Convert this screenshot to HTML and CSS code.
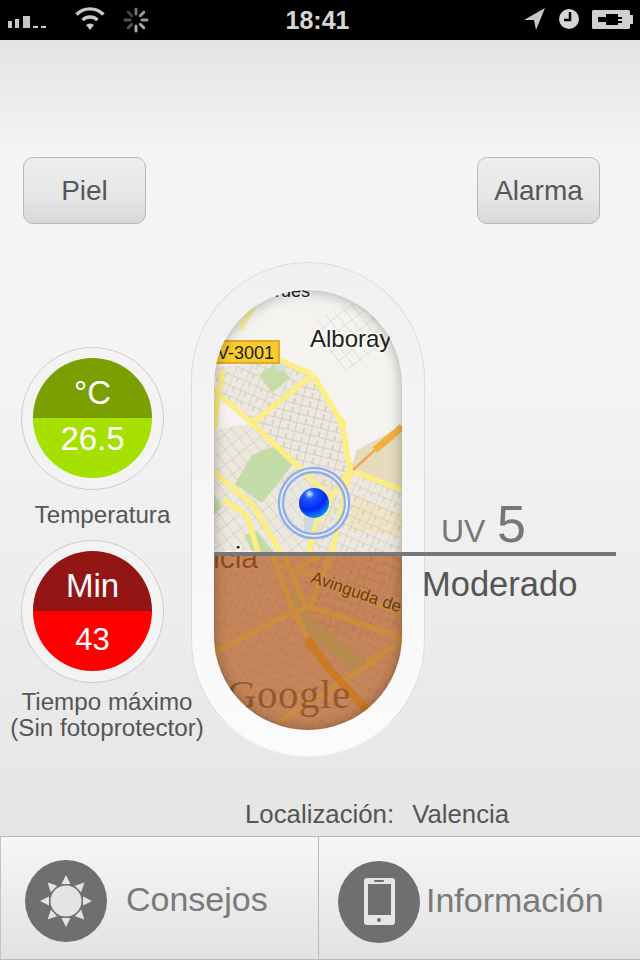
FILE: index.html
```html
<!DOCTYPE html>
<html lang="en">
<head>
<meta charset="utf-8">
<title>UV</title>
<link rel="stylesheet" href="styles.css">
</head>
<body>
<div class="status">
	<svg class="status-left" width="155" height="40" viewBox="0 0 155 40">
		<g fill="#c8c8c8">
			<rect x="8" y="21" width="4" height="7"/>
			<rect x="15" y="19" width="4" height="9"/>
			<rect x="23" y="16" width="7" height="12"/>
			<rect x="33" y="26" width="5" height="2"/>
			<rect x="41" y="26" width="5" height="2"/>
			<path d="M90 30l-4-5a6 6 0 0 1 8 0z"/>
		</g>
		<g fill="none" stroke="#c8c8c8" stroke-width="3.4">
			<path d="M82.500 20a11 11 0 0 1 15 0"/>
			<path d="M76.500 14.500a19 19 0 0 1 27 0"/>
		</g>
		<g stroke-width="3" stroke-linecap="round">
			<path d="M136 9v5" stroke="#777"/>
			<path d="M143.800 12.200l-3.500 3.500" stroke="#999"/>
			<path d="M147 20h-5" stroke="#999"/>
			<path d="M143.800 27.800l-3.500-3.500" stroke="#aaa"/>
			<path d="M136 31v-5" stroke="#aaa"/>
			<path d="M128.200 27.800l3.500-3.500" stroke="#555"/>
			<path d="M125 20h5" stroke="#555"/>
			<path d="M128.200 12.200l3.500 3.500" stroke="#444"/>
		</g>
	</svg>
	<div class="status-time">18:41</div>
	<svg class="status-right" width="160" height="40" viewBox="480 0 160 40">
		<path d="M524 20l21-12-9 22-2-10z" fill="#c8c8c8"/>
		<circle cx="569" cy="19" r="10" fill="#d5d5d5"/>
		<path d="M570 12v8h-6" fill="none" stroke="#000" stroke-width="2.500"/>
		<rect x="592" y="10" width="38" height="19" rx="1.500" fill="#d0d0d0"/>
		<rect x="630" y="15" width="3" height="9" fill="#d0d0d0"/>
		<path d="M598 17h8v-3h12v3h4v2h-4v2h4v2h-4v2h-12v-3h-8z" fill="#000"/>
	</svg>
</div>

<div class="main">
	<div class="top-buttons">
		<div class="btn">Piel</div>
		<div class="btn">Alarma</div>
	</div>

	<div class="content">
		<div class="side">
			<div class="gauge">
				<div class="gauge-top green-dark">°C</div>
				<div class="gauge-bottom green-light raised">26.5</div>
			</div>
			<div class="side-label label-temp">Temperatura</div>
			<div class="gauge">
				<div class="gauge-top red-dark">Min</div>
				<div class="gauge-bottom red-light small">43</div>
			</div>
			<div class="side-label label-time">Tiempo máximo<br>(Sin fotoprotector)</div>
		</div>

		<div class="capsule">
			<div class="map">
				<svg width="188" height="440" viewBox="0 0 188 440">
					<defs>
						<pattern id="streets" width="13" height="10" patternUnits="userSpaceOnUse" patternTransform="rotate(24)">
							<path d="M0 0h13M0 0v10M6 0v5" stroke="#8f8578" stroke-width=".6" fill="none"/>
						</pattern>
						<pattern id="streets2" width="9" height="12" patternUnits="userSpaceOnUse" patternTransform="rotate(-38)">
							<path d="M0 0h9M0 0v12" stroke="#8f8578" stroke-width=".6" fill="none"/>
						</pattern>
						<pattern id="streets3" width="16" height="9" patternUnits="userSpaceOnUse" patternTransform="rotate(14)">
							<path d="M0 0h16M0 0v9M9 4v5" stroke="#7e7568" stroke-width=".6" fill="none"/>
						</pattern>
						<radialGradient id="dot" cx=".35" cy=".2" r=".9">
							<stop offset="0" stop-color="#e8f4ff"/>
							<stop offset=".18" stop-color="#1b5cff"/>
							<stop offset=".6" stop-color="#0428f0"/>
							<stop offset="1" stop-color="#00b4ff"/>
						</radialGradient>
					</defs>
					<rect width="188" height="440" fill="#f4f3f0"/>
					<path d="M0 78l66-8 33 15-61 48-34-30zM0 140l38-7 71 67-15 66H0zM99 85l29 48 8 47-27 20-71-67zM136 180l52 20v66H94l15-66z" fill="#ece8de"/>
					<path d="M143 160l45-24v64l-52-20z" fill="#e6dcbd"/>
					<path d="M92 196l24-15 8 40-20 25-22-30zM140 205l48 20v20l-55-5z" fill="#efe4c6"/>
					<path d="M0 78l66-8 33 15-61 48-34-30z" fill="url(#streets)" opacity=".65"/>
					<path d="M0 140l38-7 71 67-15 66H0z" fill="url(#streets2)" opacity=".6"/>
					<path d="M99 85l29 48 8 47-27 20-71-67z" fill="url(#streets3)" opacity=".7"/>
					<path d="M136 180l52 20v66H94l15-66z" fill="url(#streets)" opacity=".6"/>
					<path d="M100 30l35-16 20 0 18 42-40 26-17-20z" fill="url(#streets2)" opacity=".55"/>
					<path d="M45 85l18-13 13 16-18 15z" fill="#c8dca8"/>
					<path d="M38 165l22-9 20 17-32 40-27-19z" fill="#c3dba6"/>
					<path d="M0 205l8 12-8 8zM30 245l13-4 20 25H40z" fill="#c3dba6"/>
					<path d="M61 78a5 6 0 1 1 9 0 5 6 0 0 1-9 0z" fill="#d2e0e2"/>
					<path d="M90 228l13-1 2 14-15 1z" fill="#c8d8dc"/>
					<g fill="none" stroke="#fbee82" stroke-width="5.500" stroke-linejoin="round">
						<path d="M39 17L26 40" opacity=".7"/>
						<path d="M66 70l33 15-61 48"/>
						<path d="M99 85l29 48 8 47 52 20"/>
						<path d="M0 100l38 33 71 67 5 6"/>
						<path d="M136 180l-20 30-13 20-9 36"/>
						<path d="M136 180l-13 60-6 26"/>
						<path d="M9 80L4 103l-3 35"/>
						<path d="M1 183l38 32 30 51"/>
						<path d="M9 210l24 15 12 41"/>
					</g>
					<path d="M161 160l27-23" stroke="#f3b23e" stroke-width="7" fill="none"/>
					<path d="M161 160l-22 20" stroke="#f0a84a" stroke-width="2.500" fill="none"/>
					<circle cx="99" cy="85" r="3" fill="#fbf3a8"/>
					<circle cx="128" cy="133" r="4.500" fill="#fbee82"/>

					<text class="map-text" x="61" y="7" font-size="18">rdes</text>
					<text class="map-text" x="96" y="57" font-size="24">Alboray</text>
					<rect x="-2" y="51" width="67" height="22" fill="#f8cc2e" stroke="#e4a92b" stroke-width="2"/>
					<text class="sign-text" x="3" y="69" font-size="18">V-3001</text>
					<text class="map-text" x="44" y="278" font-size="30" text-anchor="end">Valencia</text>

					<rect y="266" width="188" height="174" fill="url(#streets)" opacity=".7"/>
					<rect y="266" x="90" width="98" height="80" fill="url(#streets3)" opacity=".7"/>
					<rect y="266" width="188" height="174" fill="#b45c21" opacity=".72"/>

					<path d="M80 305l12 28 61 48" stroke="#b98a4e" stroke-width="15" fill="none"/>
					<g fill="none" stroke="#cf8c3c" stroke-width="5">
						<path d="M59 266l20 54 14 27"/>
						<path d="M71 266l20 50"/>
						<path d="M1 362l78-40 17-5 92 30"/>
						<path d="M96 317l20-51"/>
						<path d="M83 278l22-12"/>
						<path d="M66 276l24 6 98 44" stroke-width="3.500"/>
						<path d="M188 350l-30 22-95 61" stroke-width="4"/>
						<circle cx="158" cy="372" r="4" stroke-width="3"/>
					</g>
					<path d="M96 353l20 27 37 40 12 20" stroke="#cd7a24" stroke-width="8" fill="none"/>
					<circle cx="96" cy="353" r="5.500" fill="#cd7a24"/>
					<text class="road-text" x="96" y="292" font-size="17" transform="rotate(19 96 292)">Avinguda de</text>
					<text class="google-text" x="13" y="418" font-size="41">Google</text>

					<circle cx="100" cy="213" r="33" fill="#dfe6f0" opacity=".15"/>
					<circle cx="100" cy="213" r="33" fill="none" stroke="#7c9cec" stroke-width="6.500" opacity=".8"/>
					<circle cx="100" cy="213" r="33" fill="none" stroke="#e3ebfb" stroke-width="2"/>
					<circle cx="100" cy="213" r="15" fill="url(#dot)"/>
				</svg>
				<div class="map-shade"></div>
			</div>
		</div>

		<div class="reading">
			<div class="uv"><span class="uv-name">UV</span> <span class="uv-value">5</span></div>
			<div class="rule"></div>
			<div class="level">Moderado</div>
		</div>
	</div>

	<div class="place"><span>Localización:</span><span>Valencia</span></div>
</div>

<div class="tabs">
	<div class="tab tab-tips">
		<svg width="82" height="82" viewBox="0 0 82 82">
			<circle cx="41" cy="41" r="41" fill="#6f6f6f"/>
			<circle cx="41" cy="41" r="15.500" fill="#e4e4e4"/>
			<g fill="#e4e4e4">
				<path d="M36.500 24l4.500-9 4.500 9z"/>
				<path d="M36.500 24l4.500-9 4.500 9z" transform="rotate(45 41 41)"/>
				<path d="M36.500 24l4.500-9 4.500 9z" transform="rotate(90 41 41)"/>
				<path d="M36.500 24l4.500-9 4.500 9z" transform="rotate(135 41 41)"/>
				<path d="M36.500 24l4.500-9 4.500 9z" transform="rotate(180 41 41)"/>
				<path d="M36.500 24l4.500-9 4.500 9z" transform="rotate(225 41 41)"/>
				<path d="M36.500 24l4.500-9 4.500 9z" transform="rotate(270 41 41)"/>
				<path d="M36.500 24l4.500-9 4.500 9z" transform="rotate(315 41 41)"/>
			</g>
		</svg>
		<span>Consejos</span>
	</div>
	<div class="tab tab-info">
		<svg width="82" height="82" viewBox="0 0 82 82">
			<circle cx="41" cy="41" r="41" fill="#6f6f6f"/>
			<rect x="26" y="17" width="31" height="47" rx="3" fill="#e6e6e6"/>
			<rect x="30" y="23" width="23" height="31" fill="#6f6f6f"/>
			<rect x="36" y="19" width="10" height="2" rx="1" fill="#6f6f6f"/>
			<circle cx="41" cy="59" r="2" fill="#6f6f6f"/>
		</svg>
		<span>Información</span>
	</div>
</div>
</body>
</html>
```

FILE: styles.css
```css
*{padding:0; margin:0; box-sizing:border-box;}
body{width:640px; height:960px; overflow:hidden; font-family:"Liberation Sans", Arial, sans-serif; color:#555; background:#eee;}

.status{height:40px; background:#000; display:flex; justify-content:space-between; align-items:center;}
.status svg{display:block; flex:none;}
.status-time{font-size:25px; font-weight:bold; color:#d5d5d5; line-height:40px;}

.main{height:796px; padding-top:117px; background:linear-gradient(#e3e3e3, #f4f4f4 14%, #f4f4f4 42%, #e5e5e5 100%);}

.top-buttons{display:flex; justify-content:space-between; padding:0 40px 0 23px;}
.btn{width:123px; height:67px; border:1px solid #b8b8b8; border-radius:10px; background:linear-gradient(#ededed, #e6e6e6 60%, #d8d8d8); font-size:28px; line-height:66px; text-align:center; color:#55565c;}

.content{display:flex; margin-top:38px; height:495px;}

.side{width:191px; flex:none; padding-top:85px;}
.gauge{width:143px; height:143px; margin-left:21px; padding:10px 11px 11px; border:1px solid #ccc; border-radius:50%; background:#f3f3f3;}
.gauge-top, .gauge-bottom{height:60px; color:#fff; font-size:33px; text-align:center;}
.gauge-top{line-height:70px; border-radius:60px 60px 0 0;}
.gauge-bottom{line-height:57px; border-radius:0 0 60px 60px;}
.gauge-bottom.raised{line-height:42px;}
.gauge-bottom.small{font-size:31px;}
.green-dark{background:#7a9f00;}
.green-light{background:#a6e000;}
.red-dark{background:#941614;}
.red-light{background:#ff0000;}

.side-label{font-size:24.2px; line-height:26px; color:#555; white-space:nowrap; text-align:center;}
.label-temp{width:205px; height:50px; padding-top:12px;}
.label-time{width:214px; padding-top:6px;}

.capsule{width:234px; height:495px; flex:none; padding:27px 22px; border:1px solid #dcdcdc; border-bottom-color:#f0f0f0; border-radius:117px; background:linear-gradient(#f0f0f0, #f6f6f6 50%, #fbfbfb);}
.map{position:relative; width:188px; height:440px; overflow:hidden; border-radius:94px;}
.map svg{display:block;}
.map-shade{position:absolute; left:0; top:0; width:188px; height:440px; border-radius:94px; box-shadow:inset 0 0 14px rgba(0,0,0,.32);}
.map-text{font-family:"Liberation Sans", sans-serif; fill:#221e1a; stroke:#fff; stroke-width:3px; stroke-opacity:.8; paint-order:stroke;}
.sign-text{font-family:"Liberation Sans", sans-serif; fill:#221e1a;}
.road-text{font-family:"Liberation Sans", sans-serif; fill:#6e3c0a; stroke:#cc8c55; stroke-width:2px; paint-order:stroke;}
.google-text{font-family:"Liberation Serif", serif; fill:#95592a; letter-spacing:.5px;}

.reading{width:191px; flex:none; padding-top:234px;}
.uv{height:56px; line-height:56px; padding-left:16px; color:#777; white-space:nowrap;}
.uv-name{font-size:32px;}
.uv-value{font-size:52px; margin-left:7px;}
.rule{position:relative; height:4px; margin-left:-211px; background:#777;}
.level{margin:8px 0 0 -3px; font-size:34.5px; line-height:40px; white-space:nowrap; color:#555;}

.place{display:flex; gap:18px; margin-top:42px; padding-left:245px; font-size:25.8px; line-height:30px; color:#555;}

.tabs{height:124px; display:flex; border-top:1px solid #bbb; border-bottom:1px solid #bbb; border-left:1px solid #c4c4c4; background:linear-gradient(#f6f6f6, #e2e2e2);}
.tab{display:flex; align-items:center; font-size:34px; color:#7a7a7a; white-space:nowrap;}
.tab svg{display:block; flex:none;}
.tab-tips{width:318px; padding:5px 0 0 24px; gap:19px; border-right:1px solid #bbb;}
.tab-tips span{padding-bottom:2px;}
.tab-info{padding:8px 0 0 19px; gap:6px;}
.tab-info span{padding-bottom:4px;}
```
